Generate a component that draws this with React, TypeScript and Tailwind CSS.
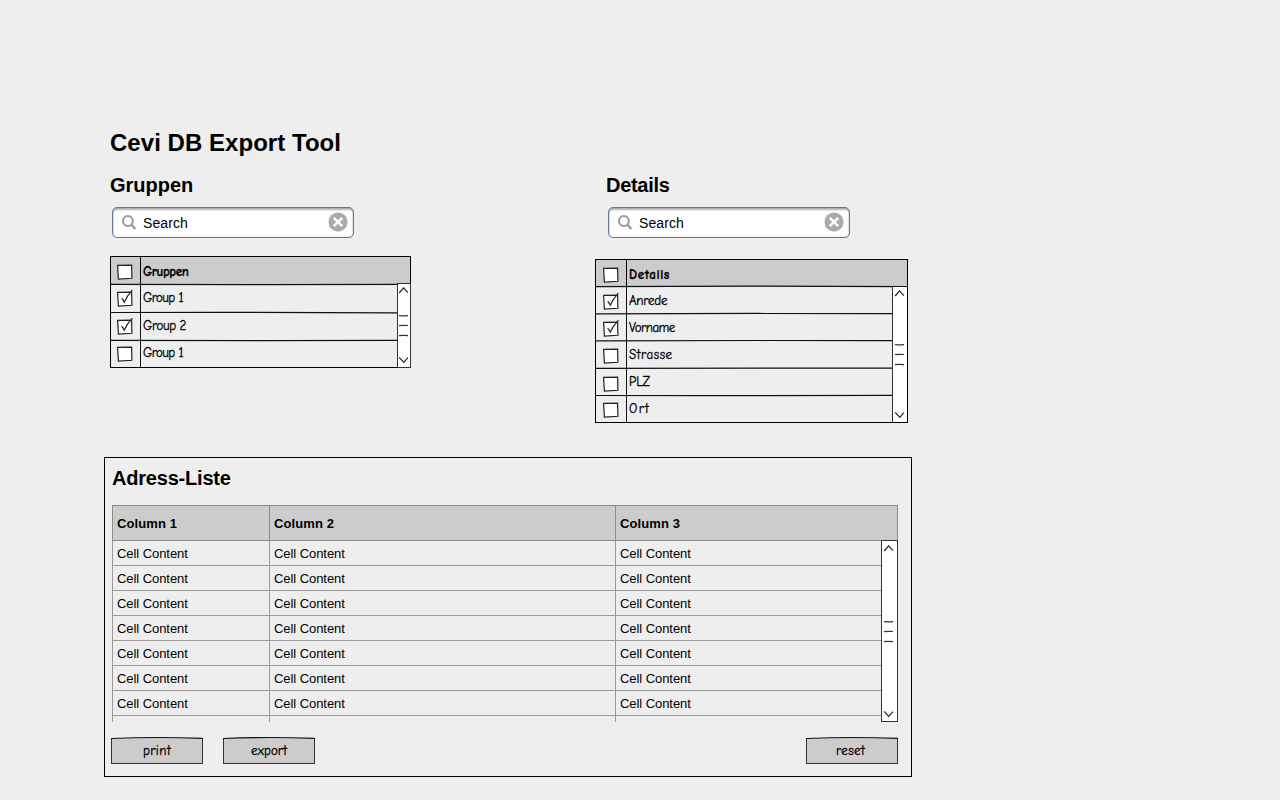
import React from "react";

const sketchFont =
  "font-['Comic_Neue','Comic_Sans_MS',Lato,sans-serif] [-webkit-text-stroke:0.3px_black]";

function Checkbox({ checked = false }: { checked?: boolean }) {
  return (
    <svg className="block h-[20px] w-[20px] shrink-0 overflow-visible" viewBox="0 0 20 20" fill="none">
      <path d="M2.6 3.4 L16.6 3.2 L16.9 16.3 L3.4 17 Z" fill="#fff" stroke="#222" strokeWidth="1.2" />
      {checked && <path d="M6.6 9.2 C8 10.2 8.4 12 9.2 13.2 C11.5 8 13.8 5 17.4 1.2" stroke="#222" strokeWidth="1.2" />}
    </svg>
  );
}

function SketchRule({ curve }: { curve: string }) {
  return (
    <svg
      className="pointer-events-none absolute inset-x-0 -bottom-px h-[3px] w-full"
      viewBox="0 0 300 3"
      preserveAspectRatio="none"
      fill="none"
    >
      <path d={curve} stroke="#111" strokeWidth="1.2" vectorEffect="non-scaling-stroke" />
    </svg>
  );
}

function Scrollbar({ className }: { className: string }) {
  return (
    <div className={`relative z-10 flex shrink-0 flex-col items-center justify-between border-[#333] bg-white ${className}`}>
      <svg className="h-[14px] w-[12px]" viewBox="0 0 12 14" fill="none">
        <path d="M1.2 9 L5.6 3.9 L9.9 8.6" stroke="#222" strokeWidth="1.2" />
      </svg>
      <svg className="h-[22px] w-[10px]" viewBox="0 0 10 22" fill="none">
        <path d="M0 0.6 Q5 1 9 0.7 M0 10.6 Q5 10.2 9 10.5 M0 20.6 Q5 20.3 9 20.7" stroke="#333" strokeWidth="1.2" />
      </svg>
      <svg className="h-[14px] w-[12px]" viewBox="0 0 12 14" fill="none">
        <path d="M1.2 4.4 L5.8 9.4 L9.9 4.7" stroke="#222" strokeWidth="1.2" />
      </svg>
    </div>
  );
}

function SearchBox() {
  return (
    <div className="flex h-[31px] w-[242px] items-center rounded-[5px] border border-[#66788f] bg-white pr-[4px] pl-[9px] shadow-[inset_0_2px_2px_rgba(0,0,0,0.3),inset_0_0_2px_rgba(0,0,0,0.18)]">
      <svg className="h-[16px] w-[16px]" viewBox="0 0 16 16" fill="none" stroke="#95989b">
        <circle cx="5.9" cy="6" r="4.9" strokeWidth="2" />
        <path d="M9.4 9.7 L13.3 14" strokeWidth="2.4" />
      </svg>
      <span className="ml-[5px] flex-1 text-[14px] leading-[18px] tracking-[0.08px]">Search</span>
      <svg className="mr-px -mt-px h-[20px] w-[20px]" viewBox="0 0 20 20">
        <circle cx="10" cy="10" r="9.6" fill="#aaa" />
        <path d="M5.8 5.8 L14.2 14.2 M14.2 5.8 L5.8 14.2" stroke="#fff" strokeWidth="2.4" />
      </svg>
    </div>
  );
}

type Item = { label: string; checked?: boolean; height: string; curve?: string; text: string };

const groups: Item[] = [
  { label: "Group 1", checked: true, height: "h-[28px]", curve: "M0 1.5 Q150 1.1 300 1.8", text: "pt-[4px] tracking-[-0.6px]" },
  { label: "Group 2", checked: true, height: "h-[28px]", curve: "M0 1.3 Q150 1.9 300 1.4", text: "pt-[4px] tracking-[-0.4px]" },
  { label: "Group 1", height: "h-[26px]", text: "pt-[3px] tracking-[-0.6px]" },
];

const details: Item[] = [
  { label: "Anrede", checked: true, height: "h-[27px]", curve: "M0 1.8 Q150 1.2 300 1.7", text: "pt-[5px] tracking-[-0.2px]" },
  { label: "Vorname", checked: true, height: "h-[27px]", curve: "M0 1.8 Q150 1.3 300 1.7", text: "pt-[5px] tracking-[-0.5px]" },
  { label: "Strasse", height: "h-[28px]", curve: "M0 1.4 Q150 0.9 300 1.2", text: "pt-[5px] tracking-[0.55px]" },
  { label: "PLZ", height: "h-[27px]", curve: "M0 1.5 Q150 1.7 300 1.4", text: "pt-[4px] tracking-[-0.1px]" },
  { label: "Ort", height: "h-[26px]", text: "pt-[4px] tracking-[1.3px]" },
];

function CheckRow({ item, cell }: { item: Item; cell: string }) {
  return (
    <div className={`relative flex ${item.height}`}>
      <div className={`flex shrink-0 items-center justify-center border-r border-[#111] ${cell}`}>
        <Checkbox checked={item.checked} />
      </div>
      <div className={`pl-[2px] text-[13px] leading-[18px] ${item.text}`}>{item.label}</div>
      {item.curve && <SketchRule curve={item.curve} />}
    </div>
  );
}

function SketchButton({ tracking, children }: { tracking: string; children: React.ReactNode }) {
  return (
    <button className={`relative block h-[26px] w-[92px] rounded-[1px] border-x-[1.5px] border-b-[1.5px] border-[#333] bg-[#ccc] text-[13px] leading-[24px] ${tracking} ${sketchFont}`}>
      {children}
      <svg className="pointer-events-none absolute -top-px -left-px h-[3px] w-[92px] overflow-visible" viewBox="0 0 92 3" fill="#ccc">
        <path d="M0 1.5 Q46 -0.4 92 1.4" stroke="#111" strokeWidth="1.2" />
      </svg>
    </button>
  );
}

const cellRows = ["r1", "r2", "r3", "r4", "r5", "r6", "r7"];
const columns = "grid grid-cols-[157px_346px_1fr]";

export default function App() {
  return (
    <main className="h-[800px] w-[1280px] overflow-hidden bg-[#eee] pt-[129px] pl-[104px] font-['Liberation_Sans',Arial,sans-serif] text-black">
      <h1 className="pl-[6px] text-[24px] leading-[28px] font-bold tracking-[0.04px]">Cevi DB Export Tool</h1>

      <div className="mt-[16px] flex h-[284px]">
        <section className="w-[491px] pl-[6px]">
          <h2 className="text-[20px] leading-[24px] font-bold">Gruppen</h2>
          <div className="mt-[10px] ml-[2px]">
            <SearchBox />
          </div>
          <div className={`mt-[18px] h-[112px] w-[301px] border border-black ${sketchFont}`}>
            <div className="relative flex h-[28px] bg-[#ccc]">
              <div className="flex w-[30px] shrink-0 items-center justify-center border-r border-black pt-[2px] pr-px">
                <Checkbox />
              </div>
              <div className="pt-[6px] pl-[2px] text-[13px] leading-[18px] font-bold tracking-[-0.4px]">Gruppen</div>
              <SketchRule curve="M0 1.4 Q150 1.7 300 1.4" />
            </div>
            <div className="flex h-[82px]">
              <div className="flex-1">
                {groups.map((g, i) => (
                  <CheckRow key={i} item={g} cell="w-[30px] pr-px" />
                ))}
              </div>
              <Scrollbar className="-mt-[2px] -mr-px h-[85px] w-[14px] border-[1.5px]" />
            </div>
          </div>
        </section>

        <section>
          <h2 className="pl-[11px] text-[20px] leading-[24px] font-bold tracking-[-0.3px]">Details</h2>
          <div className="mt-[10px] ml-[13px]">
            <SearchBox />
          </div>
          <div className={`mt-[21px] h-[164px] w-[313px] border border-black ${sketchFont}`}>
            <div className="relative flex h-[27px] bg-[#ccc]">
              <div className="flex w-[31px] shrink-0 items-center justify-center border-r border-black pt-[3px]">
                <Checkbox />
              </div>
              <div className="pt-[6px] pl-[2px] text-[13px] leading-[18px] font-bold tracking-[0.6px]">Details</div>
              <SketchRule curve="M0 1.7 Q150 0.7 300 1.7" />
            </div>
            <div className="flex h-[135px]">
              <div className="flex-1">
                {details.map((d) => (
                  <CheckRow key={d.label} item={d} cell="w-[31px] pt-[2px]" />
                ))}
              </div>
              <Scrollbar className="h-[135px] w-[15px] border-l" />
            </div>
          </div>
        </section>
      </div>

      <section className="h-[320px] w-[808px] border border-black pl-[7px]">
        <h2 className="mt-[8px] text-[20px] leading-[24px] font-bold tracking-[-0.2px]">Adress-Liste</h2>
        <div className="mt-[15px] h-[217px] w-[786px] text-[13px]">
          <div className={`${columns} h-[36px] border border-[#8c8c8c] bg-[#ccc] leading-[36px] font-bold tracking-[0.1px]`}>
            <div className="h-[34px] border-r border-[#8c8c8c] pl-[4px]">Column 1</div>
            <div className="h-[34px] border-r border-[#8c8c8c] pl-[4px]">Column 2</div>
            <div className="h-[34px] pl-[4px]">Column 3</div>
          </div>
          <div className="flex h-[181px]">
            <div className="h-[181px] flex-1 overflow-hidden border-l border-[#9a9a9a]">
              {cellRows.map((r) => (
                <div key={r} className={`${columns} h-[25px] border-b border-[#9a9a9a] leading-[26px] tracking-[-0.06px]`}>
                  <div className="h-[24px] border-r border-[#9a9a9a] pl-[4px]">Cell Content</div>
                  <div className="h-[24px] border-r border-[#9a9a9a] pl-[4px]">Cell Content</div>
                  <div className="h-[24px] pl-[4px]">Cell Content</div>
                </div>
              ))}
              <div className={`${columns} h-[6px]`}>
                <div className="border-r border-[#9a9a9a]" />
                <div className="border-r border-[#9a9a9a]" />
              </div>
            </div>
            <Scrollbar className="-mt-px h-[182px] w-[17px] border-[1.5px] pt-px pr-px" />
          </div>
        </div>
        <div className="mt-[16px] -ml-px flex w-[787px]">
          <SketchButton tracking="tracking-[0.45px]">print</SketchButton>
          <div className="ml-[20px]">
            <SketchButton tracking="tracking-[0.1px]">export</SketchButton>
          </div>
          <div className="ml-auto">
            <SketchButton tracking="tracking-[0.4px] pr-[3px]">reset</SketchButton>
          </div>
        </div>
      </section>
    </main>
  );
}
